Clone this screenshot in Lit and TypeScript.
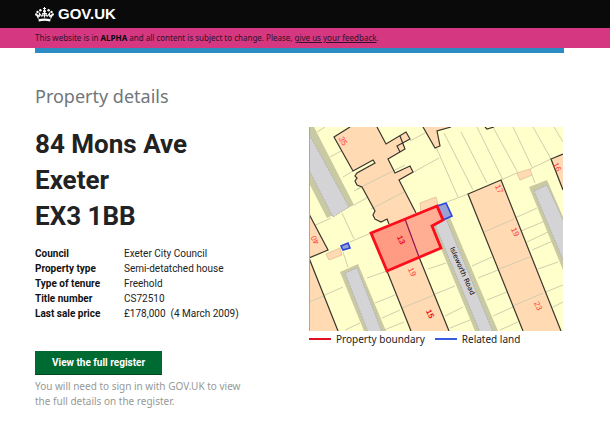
import { LitElement, html, css, svg } from "lit";
import { customElement } from "lit/decorators.js";

type Label = { x: number; y: number; turn: number; text: string; strong?: boolean };

const numbers: Label[] = [
  { x: 343, y: 141, turn: 60, text: "35" },
  { x: 315, y: 240, turn: 240, text: "40" },
  { x: 401, y: 240, turn: 65, text: "13", strong: true },
  { x: 412, y: 272, turn: 65, text: "19" },
  { x: 430, y: 314, turn: 65, text: "15", strong: true },
  { x: 499, y: 189, turn: 65, text: "17" },
  { x: 515, y: 232, turn: 65, text: "19" },
  { x: 538, y: 306, turn: 65, text: "23" },
  { x: 557, y: 167, turn: 65, text: "16" },
];

@customElement("property-map")
export class PropertyMap extends LitElement {
  static styles = css`
    :host { display: block; }
    .map { display: block; width: 100%; height: auto; }
    .land { fill: #ffffcb; }
    .verge { fill: #c9c9a3; }
    .road { fill: #d4d4d6; stroke: #b4b4b0; stroke-width: 1; stroke-dasharray: 2 1; }
    .house { fill: #ffdab3; }
    .shed { fill: #ffdab3; stroke: #e6c8a0; }
    .wall { fill: none; stroke: #3a352d; stroke-width: 1.2; }
    .fence { fill: none; stroke: #d2cdae; stroke-width: 1; }
    .edge { stroke: #a9a9a4; stroke-width: 1; }
    .plot { fill: #ff9b82; }
    .plot-side { fill: #ffae94; }
    .party { stroke: #8c1450; stroke-width: 1.2; }
    .boundary { fill: none; stroke: #fb0d1b; stroke-width: 2.8; }
    .related { fill: #98a0d4; stroke: #2b45dd; stroke-width: 1.6; }
    .number { fill: #ff3a3a; font: 8px "Liberation Sans", sans-serif; text-anchor: middle; dominant-baseline: central; }
    .strong { fill: #ec1020; font-weight: bold; }
    .street { fill: #000; font: 7px "DejaVu Sans", sans-serif; text-anchor: middle; dominant-baseline: central; }
  `;

  render() {
    return html`
      <svg class="map" viewBox="309 127 254 204" role="img" aria-label="Map of the property on Isleworth Road">
        <rect class="land" x="309" y="127" width="254" height="204" />

        <path class="fence" d="M317 132L325 127M330 157L343 150M353 171L343 177M354 205L439 158M362 187L354 191
          M410 141L425 133M331 218L309 228M342 213L354 239M350 242L371 233M343 252L348 267
          M309 302L343 287M367 278L387 271M375 303L395 295M382 318L400 310M345 330L360 323M384 330L404 322
          M428 269L446 263M435 294L455 286M445 316L463 307M450 328L470 320
          M472 266L492 257M478 278L498 270M487 300L507 292M493 316L513 307M500 330L518 322
          M521 231L545 221M527 242L548 232M532 250L553 241M538 269L558 262M543 293L563 285M553 307L563 302
          M447 202L468 194M501 180L517 173M530 169L551 159M436 147L458 197M444 133L473 190M461 132L487 183
          M477 127L503 180M493 127L518 173M513 127L532 167M533 127L551 159M554 127L563 142
          M532 175L535 183M515 218L537 208" />

        <path class="verge" d="M309 127H314L354 205L327 218L309 183Z" />
        <path class="road" d="M308 132L349 207L333 217L308 168Z" />
        <path class="verge" d="M340 272L358 264L386 331H364Z" />
        <path class="road" d="M345 273L357 268L382 332H368Z" />
        <path class="verge" d="M430 222L448 213L498 331H475Z" />
        <path class="road" d="M435 225L446 219L493 332H480Z" />
        <path class="verge" d="M529 187L547 180L563 217V270Z" />
        <path class="road" d="M534 191L547 185L564 222V262Z" />

        <path class="house" d="M334 137L350 127H377L386 144L406 132L410 139L403 142L405 149L388 159L395 173L410 166L413 172L399 180L416 213L389 224L387 220L381 222L373 215L375 211L362 187L357 185L355 181L357 173L375 163L373 160L353 171Z" />
        <path class="house" d="M423 127L435 148L440 146L437 131L451 127Z" />
        <path class="house" d="M309 214L328 250L309 258ZM309 258L338 331H309Z" />
        <path class="house" d="M387 271L419 257L449 331H411Z" />
        <path class="house" d="M468 194L501 180L561 331H523Z" />
        <path class="house" d="M551 159L563 154V190Z" />
        <path class="shed" d="M420 203L436 197L438 205L421 212Z" />
        <path class="shed" d="M326 254L340 248L342 255L329 260Z" />
        <path class="shed" d="M517 173L530 169L532 175L520 180Z" />

        <path class="fence" d="M357 189L405 165M371 209L404 192M309 302L324 296M402 308L434 295M484 232L514 219M499 269L530 257M513 306L543 293" />

        <path class="wall" d="M350 127L334 137L353 171L373 160L375 163L357 173L355 176L357 178L355 181L357 185L362 187L375 211L373 215L375 219L381 222L387 219L389 224M377 127L386 144L406 132L410 139L397 146L400 152L405 149L400 136M405 149L388 159L395 173L410 166L413 172L399 180L416 213" />
        <path class="wall" d="M423 127L435 148L440 146L437 131L451 127M485 127L487 129L494 127" />
        <path class="wall" d="M309 214L328 250L309 258L338 331M387 271L411 331M419 257L449 331M523 331L468 194L501 180L561 331M563 154L551 159L563 190" />
        <path class="edge" d="M309.500 127V331" />

        <path class="plot" d="M371 233L405 219L419 257L387 271Z" />
        <path class="plot-side" d="M405 219L437 206L443 220L432 226L441 248L419 257Z" />
        <path class="party" d="M405 219L419 257" />
        <path class="related" d="M437 206L446 203L452 216L443 220Z" />
        <path class="related" d="M341 246L348 243L350 248L343 250Z" />
        <path class="boundary" d="M371 233L437 206L443 220L432 226L441 248L387 271Z" />

        ${numbers.map(
          (n) => svg`<text class=${n.strong ? "number strong" : "number"} transform="translate(${n.x} ${n.y}) rotate(${n.turn})">${n.text}</text>`
        )}
        <text class="street" transform="translate(462 271) rotate(66)">Isleworth Road</text>
      </svg>
    `;
  }
}

@customElement("app-root")
export class AppRoot extends LitElement {
  static styles = css`
    :host { display: block; min-height: 100vh; background: #fff; color: #222; font: 10px/15px Roboto, sans-serif; }
    .top { background: #0a0a0a; padding: 0 35px; }
    .brand { display: inline-flex; align-items: center; gap: 4px; height: 28px; color: #fff; font: bold 15px/28px "Liberation Sans", sans-serif; text-decoration: none; }
    .crown { display: block; }
    .phase { margin: 0; padding: 0 35px; background: #d53880; color: #321228; font: 8px/20px "Noto Sans", sans-serif; }
    .phase strong { color: #0a0a0a; }
    .phase a { color: inherit; }
    .content { margin: 0 46px 0 35px; border-top: 5px solid #2b8cc4; }
    .title { margin: 30px 0 18px; color: #6f777b; font: 400 18px/26px "Noto Sans", sans-serif; }
    .columns { display: grid; grid-template-columns: 1fr 1fr; gap: 19px; }
    .plan { padding-right: 1px; }
    .address { margin: -1px 0 12px; font: bold 26px/36px Roboto, sans-serif; }
    .address span { display: block; }
    .facts { border-collapse: collapse; }
    .facts th, .facts td { padding: 0; text-align: left; white-space: nowrap; }
    .facts th { width: 89px; color: #111; }
    .view { display: block; margin: 30px 0 4px; padding: 0 17px; border: 0; border-bottom: 1px solid #004a20; background: #006a33; color: #fff; font: 700 10px/23px Roboto, sans-serif; }
    .hint { margin: 0; color: #979997; font-family: "Noto Sans", sans-serif; white-space: nowrap; }
    .legend { display: flex; gap: 10px; margin: 0; padding: 0; list-style: none; font: 10px/16px "Noto Sans", sans-serif; white-space: nowrap; }
    .legend li { display: flex; align-items: center; gap: 5px; }
    .key { width: 22px; height: 2px; background: #e01020; }
    .key.blue { background: #3a5ae0; }
  `;

  render() {
    return html`
      <header class="top">
        <a class="brand" href="#">
          <svg class="crown" width="19" height="15" viewBox="0 0 19 15" aria-hidden="true">
            <g fill="#fff">
              <circle cx="9.5" cy="4.2" r="1.4" /><path d="M9 0h1v1h1v1h-1v1H9V2H8V1h1z" />
              <circle cx="5.4" cy="3.3" r="1.2" /><circle cx="13.6" cy="3.3" r="1.2" />
              <circle cx="2.5" cy="4.9" r="1.2" /><circle cx="16.5" cy="4.9" r="1.2" />
              <circle cx="1.3" cy="7.4" r="1.2" /><circle cx="17.7" cy="7.4" r="1.2" />
              <path d="M3.4 12.2Q9.5 10.7 15.6 12.2L15.2 14.4Q9.5 13.2 3.8 14.4Z" />
            </g>
            <path d="M3.5 11.5L1.7 8L4.2 9.3L4.5 6.5L6.5 9L8 8.5L7.7 6.5H11.3L11 8.5L12.5 9L14.5 6.5L14.8 9.3L17.3 8L15.5 11.5M9.5 5V10.5" fill="none" stroke="#fff" stroke-width="1.2" />
          </svg>
          <span>GOV.UK</span>
        </a>
      </header>
      <p class="phase">This website is in <strong>ALPHA</strong> and all content is subject to change. Please, <a href="#">give us your feedback</a>.</p>
      <main class="content">
        <h1 class="title">Property details</h1>
        <div class="columns">
          <section>
            <h2 class="address"><span>84 Mons Ave</span><span>Exeter</span><span>EX3 1BB</span></h2>
            <table class="facts">
              <tr><th scope="row">Council</th><td>Exeter City Council</td></tr>
              <tr><th scope="row">Property type</th><td>Semi-detatched house</td></tr>
              <tr><th scope="row">Type of tenure</th><td>Freehold</td></tr>
              <tr><th scope="row">Title number</th><td>CS72510</td></tr>
              <tr><th scope="row">Last sale price</th><td>£178,000 &nbsp;(4 March 2009)</td></tr>
            </table>
            <button class="view" type="button">View the full register</button>
            <p class="hint">You will need to sign in with GOV.UK to view<br />the full details on the register.</p>
          </section>
          <section class="plan">
            <property-map></property-map>
            <ul class="legend">
              <li><span class="key"></span>Property boundary</li>
              <li><span class="key blue"></span>Related land</li>
            </ul>
          </section>
        </div>
      </main>
    `;
  }
}
